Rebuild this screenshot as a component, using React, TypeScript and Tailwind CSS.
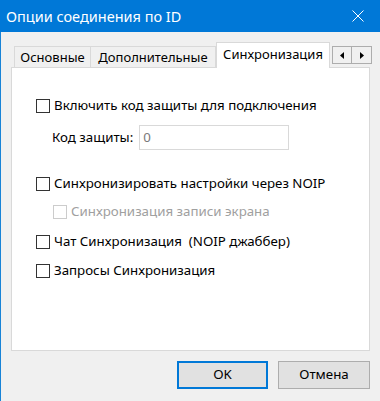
function Check({ disabled = false, label }: { disabled?: boolean; label: string }) {
  return (
    <label className="flex items-center h-[14px] gap-[4px]">
      <span
        className={
          'w-[14px] h-[14px] shrink-0 bg-white border ' +
          (disabled ? 'border-[#cccccc]' : 'border-[#333333]')
        }
      />
      <span className={'whitespace-pre ' + (disabled ? 'text-[#a0a0a0]' : 'text-black')}>{label}</span>
    </label>
  );
}

export default function App() {
  return (
    <div
      className="w-[380px] h-[401px] flex flex-col text-[13.3px] leading-none overflow-hidden"
      style={{ fontFamily: '"Noto Sans", "DejaVu Sans", sans-serif' }}
    >
      {/* Title bar */}
      <div className="h-[32px] bg-[#0078d7] text-white flex items-center justify-between pl-[6px] pr-[16px]">
        <span className="text-[14.5px]">Опции соединения по ID</span>
        <svg width="12" height="12" viewBox="0 0 12 12" aria-hidden="true">
          <path d="M0.5 0.5L11.5 11.5M11.5 0.5L0.5 11.5" stroke="white" strokeWidth="1" />
        </svg>
      </div>

      <div className="flex-1 bg-[#f0f0f0] border-l border-[#1883d7] pl-[10px] pt-[10px]">
        {/* Tabs */}
        <div className="flex items-end h-[26px] relative z-10 text-[13px]">
          <div className="ml-[3px] w-[77px] h-[22px] border border-b-0 border-[#d9d9d9] flex items-center justify-center">
            Основные
          </div>
          <div className="w-[125px] h-[22px] border border-b-0 border-l-0 border-[#d9d9d9] flex items-center justify-center">
            Дополнительные
          </div>
          <div className="w-[114px] h-[26px] bg-white border border-b-0 border-[#d9d9d9] flex items-center justify-center pb-[2px]">
            Синхронизация
          </div>
          <div className="self-start mt-[4px] ml-[2px] flex">
            <div className="w-[20px] h-[18px] border border-[#adadad] bg-[#f0f0f0] flex items-center justify-center">
              <svg width="4" height="7" viewBox="0 0 4 7"><path d="M4 0L0 3.5L4 7Z" fill="black" /></svg>
            </div>
            <div className="w-[20px] h-[18px] border border-l-0 border-[#adadad] bg-[#f0f0f0] flex items-center justify-center">
              <svg width="4" height="7" viewBox="0 0 4 7"><path d="M0 0L4 3.5L0 7Z" fill="black" /></svg>
            </div>
          </div>
        </div>

        {/* Panel */}
        <div className="w-[359px] h-[284px] -mt-[1px] bg-white border border-[#d9d9d9] flex flex-col pl-[24px]">
          <div className="mt-[31px]">
            <Check label="Включить код защиты для подключения" />
          </div>
          <div className="mt-[12px] ml-[16px] flex items-center h-[25px] gap-[6px]">
            <span>Код защиты:</span>
            <div className="w-[150px] h-[25px] border border-[#d9d9d9] flex items-center px-[3px] text-[#7a7a7a]">0</div>
          </div>
          <div className="mt-[27px]">
            <Check label="Синхронизировать настройки через NOIP" />
          </div>
          <div className="mt-[14px] ml-[17px]">
            <Check disabled label="Синхронизация записи экрана" />
          </div>
          <div className="mt-[16px]">
            <Check label="Чат Синхронизация  (NOIP джаббер)" />
          </div>
          <div className="mt-[15px]">
            <Check label="Запросы Синхронизация" />
          </div>
        </div>

        {/* Buttons */}
        <div className="flex justify-end gap-[10px] w-[359px] mt-[10px]">
          <button className="w-[91px] h-[28px] bg-[#e1e1e1] border-2 border-[#0078d7]">OK</button>
          <button className="w-[92px] h-[28px] bg-[#e1e1e1] border border-[#adadad]">Отмена</button>
        </div>
      </div>
    </div>
  );
}
